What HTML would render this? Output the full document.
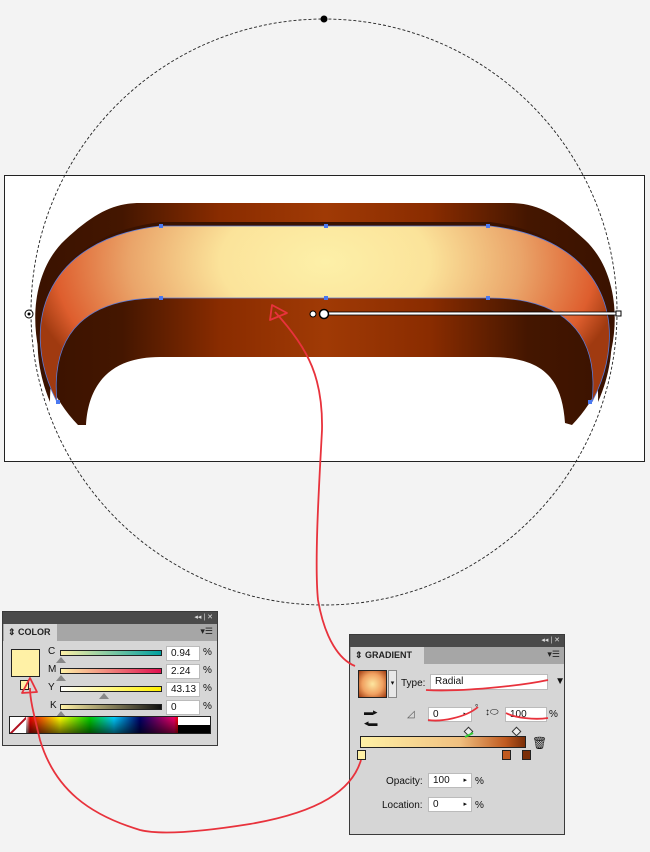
<!DOCTYPE html>
<html><head><meta charset="utf-8"><style>
*{margin:0;padding:0;box-sizing:border-box}
body{width:650px;height:852px;background:#f3f3f3;position:relative;overflow:hidden;font-family:"Liberation Sans",sans-serif;font-size:10px;color:#111}
.abs{position:absolute}
.panel{position:absolute;background:#d6d6d6;border:1px solid #3a3a3a}
.hdr{position:absolute;left:0;right:0;top:0;height:12px;background:#4a4a4a;color:#ddd;font-size:7px;text-align:right;padding-right:4px;line-height:12px}
.tabs{position:absolute;left:0;right:0;top:12px;height:17px;background:#a6a6a6}
.tab{position:absolute;left:1px;top:0;height:17px;background:#d6d6d6;font-weight:bold;font-size:9px;line-height:17px;padding-left:4px;color:#222}
.menu{position:absolute;right:4px;top:2px;font-size:9px;color:#222}
.field{position:absolute;background:#fff;border:1px solid #bbb;height:15px;font-size:10px;line-height:13px;padding-left:4px}
.lbl{position:absolute;font-size:10px}
.slider{position:absolute;height:6px;border:1px solid #222}
.tri{position:absolute;width:0;height:0;border-left:5px solid transparent;border-right:5px solid transparent;border-bottom:6px solid #888}
</style></head><body>
<svg class="abs" style="left:0;top:0" width="650" height="852">
<defs>
<linearGradient id="dk" x1="0" x2="1" y1="0" y2="0">
<stop offset="0" stop-color="#3a1200"/><stop offset="0.15" stop-color="#441600"/><stop offset="0.32" stop-color="#8a2c00"/><stop offset="0.5" stop-color="#a03a05"/><stop offset="0.68" stop-color="#8a2c00"/><stop offset="0.85" stop-color="#441600"/><stop offset="1" stop-color="#3a1200"/></linearGradient>
<radialGradient id="lt" gradientUnits="userSpaceOnUse" cx="325" cy="262" r="300" gradientTransform="translate(325 262) scale(1 0.6) translate(-325 -262)">
<stop offset="0" stop-color="#fdf0a8"/><stop offset="0.35" stop-color="#fbe39a"/><stop offset="0.65" stop-color="#eaa56a"/><stop offset="0.9" stop-color="#de5e2e"/><stop offset="1" stop-color="#a03a10"/></radialGradient>
</defs>
<rect x="4.5" y="175.5" width="640" height="286" fill="#fff" stroke="#222"/>
<path d="M78,425 C25,370 22,280 65,240 C95,212 115,203 140,203 L510,203 C535,203 555,212 585,240 C628,280 625,370 572,425 L565,423 C562,380 545,357 490,357 L160,357 C105,357 88,390 86,425 Z" fill="url(#dk)"/>
<path d="M50,402 C20,330 40,238 160,222 L490,222 C610,238 630,330 598,402 C600,330 560,298 490,298 L160,298 C90,298 50,330 50,402 Z" fill="#3a1200"/>
<path d="M57,402 C20,330 40,240 160,226 L490,226 C610,240 630,330 592,402 C600,330 560,298 490,298 L160,298 C90,298 50,330 57,402 Z" fill="url(#lt)"/>
<path d="M57,402 C20,330 40,240 160,226 L490,226 C610,240 630,330 592,402 M160,298 L490,298 C560,298 600,330 592,402 M160,298 C90,298 50,330 57,402" fill="none" stroke="#5a7ad8" stroke-width="0.8"/>
<g fill="#4a78f0"><rect x="159" y="224" width="4" height="4"/><rect x="324" y="224" width="4" height="4"/><rect x="486" y="224" width="4" height="4"/><rect x="159" y="296" width="4" height="4"/><rect x="324" y="296" width="4" height="4"/><rect x="486" y="296" width="4" height="4"/><rect x="56" y="400" width="4" height="4"/><rect x="588" y="400" width="4" height="4"/></g>
<circle cx="324" cy="312" r="293" fill="none" stroke="#222" stroke-dasharray="3,2" stroke-width="0.9"/>
<circle cx="324" cy="19" r="3.5" fill="#000"/>
<circle cx="29" cy="314" r="4" fill="#fff" stroke="#000"/><circle cx="29" cy="314" r="1.5" fill="#000"/>
<rect x="326" y="312" width="293" height="3" fill="#fff" stroke="#000" stroke-width="0.8"/>
<rect x="616" y="311" width="5" height="5" fill="#fff" stroke="#000"/>
<circle cx="313" cy="314" r="3" fill="#fff" stroke="#000"/>
<circle cx="324" cy="314" r="4.5" fill="#fff" stroke="#000" stroke-width="1.5"/>
</svg>

<div class="panel" style="left:2px;top:611px;width:216px;height:135px">
<div class="hdr">◂◂ | ✕</div>
<div class="tabs"><div class="tab" style="width:53px">⇕ COLOR</div><div class="menu">▾☰</div></div>
<div class="abs" style="left:8px;top:37px;width:29px;height:28px;background:#fff1a6;border:1px solid #222"></div>
<div class="abs" style="left:17px;top:68px;width:9px;height:10px;background:#fff1a6;border:1px solid #222"></div>
<div class="lbl" style="left:45px;top:34px">C</div><div class="slider" style="left:57px;top:38px;width:102px;background:linear-gradient(90deg,#fff1a6,#00a0a0)"></div><div class="tri" style="left:53px;top:45px"></div>
<div class="field" style="left:163px;top:34px;width:34px">0.94</div><div class="lbl" style="left:200px;top:35px">%</div>
<div class="lbl" style="left:45px;top:52px">M</div><div class="slider" style="left:57px;top:56px;width:102px;background:linear-gradient(90deg,#fff1a6,#e01050)"></div><div class="tri" style="left:53px;top:63px"></div>
<div class="field" style="left:163px;top:52px;width:34px">2.24</div><div class="lbl" style="left:200px;top:53px">%</div>
<div class="lbl" style="left:45px;top:70px">Y</div><div class="slider" style="left:57px;top:74px;width:102px;background:linear-gradient(90deg,#fff,#fff000)"></div><div class="tri" style="left:96px;top:81px"></div>
<div class="field" style="left:163px;top:70px;width:34px">43.13</div><div class="lbl" style="left:200px;top:71px">%</div>
<div class="lbl" style="left:47px;top:88px">K</div><div class="slider" style="left:57px;top:92px;width:102px;background:linear-gradient(90deg,#fff1a6,#111)"></div><div class="tri" style="left:53px;top:99px"></div>
<div class="field" style="left:163px;top:88px;width:34px">0</div><div class="lbl" style="left:200px;top:89px">%</div>
<div class="abs" style="left:6px;top:104px;width:202px;height:18px;border:1px solid #222;background:linear-gradient(180deg,transparent,rgba(0,0,0,.6)),linear-gradient(90deg,#fff 0,#fff 8%,#e00 10%,#ff0 25%,#0c0 40%,#0cf 52%,#006 65%,#e06 82%,#e00 84%,#e00 84%,transparent 84%);"></div>
<div class="abs" style="left:7px;top:105px;width:16px;height:16px;background:#fff;overflow:hidden"><div style="position:absolute;left:-3px;top:7px;width:24px;height:2px;background:#b01020;transform:rotate(-45deg)"></div></div>
<div class="abs" style="left:175px;top:105px;width:32px;height:8px;background:#fff"></div><div class="abs" style="left:175px;top:113px;width:32px;height:8px;background:#000"></div>
</div>

<div class="panel" style="left:349px;top:634px;width:216px;height:201px">
<div class="hdr">◂◂ | ✕</div>
<div class="tabs"><div class="tab" style="width:73px">⇕ GRADIENT</div><div class="menu">▾☰</div></div>
<div class="abs" style="left:8px;top:35px;width:29px;height:28px;border:1px solid #222;background:radial-gradient(circle,#fde6a0 0,#f0a060 55%,#a03a10 100%)"></div>
<div class="abs" style="left:38px;top:35px;width:9px;height:28px;background:#e8e8e8;border:1px solid #888;font-size:7px;line-height:26px;text-align:center">▾</div>
<div class="lbl" style="left:51px;top:43px">Type:</div>
<div class="field" style="left:80px;top:39px;width:118px;height:16px;font-size:10px">Radial<span style="position:absolute;right:-18px;top:0">▼</span></div>
<div class="lbl" style="left:14px;top:72px;font-size:9px">▬▸<br>◂▬</div>
<div class="lbl" style="left:57px;top:74px;color:#555">◿</div>
<div class="field" style="left:78px;top:72px;width:44px">0<span style="position:absolute;right:4px;font-size:7px">▸</span></div>
<div class="lbl" style="left:125px;top:68px;font-size:8px">°</div>
<div class="lbl" style="left:135px;top:72px">↕⬭</div>
<div class="field" style="left:155px;top:72px;width:42px">100</div><div class="lbl" style="left:199px;top:74px">%</div>
<div class="abs" style="left:10px;top:101px;width:166px;height:12px;border:1px solid #222;background:linear-gradient(90deg,#fff1a6,#f0c080 60%,#c05a20 88%,#7a2e08)"></div>
<div class="abs" style="left:115px;top:93px;width:7px;height:7px;background:#eee;border:1px solid #333;transform:rotate(45deg)"></div>
<div class="abs" style="left:163px;top:93px;width:7px;height:7px;background:#eee;border:1px solid #333;transform:rotate(45deg)"></div>
<div class="lbl" style="left:182px;top:101px;font-size:12px">🗑</div>
<div class="abs" style="left:7px;top:115px;width:9px;height:10px;background:#fff1a6;border:1px solid #222"></div>
<div class="abs" style="left:152px;top:115px;width:9px;height:10px;background:#c05a20;border:1px solid #222"></div>
<div class="abs" style="left:172px;top:115px;width:9px;height:10px;background:#7a2e08;border:1px solid #222"></div>
<div class="lbl" style="left:36px;top:141px">Opacity:</div>
<div class="field" style="left:78px;top:138px;width:44px">100<span style="position:absolute;right:4px;font-size:7px">▸</span></div><div class="lbl" style="left:125px;top:141px">%</div>
<div class="lbl" style="left:32px;top:165px">Location:</div>
<div class="field" style="left:78px;top:162px;width:44px">0<span style="position:absolute;right:4px;font-size:7px">▸</span></div><div class="lbl" style="left:125px;top:165px">%</div>
</div>

<svg class="abs" style="left:0;top:0" width="650" height="852">
<g fill="none" stroke="#e8323c" stroke-width="1.8" stroke-linejoin="round">
<path d="M355,666 C340,660 325,640 318,600 C314,560 320,470 322,430 C323,380 310,350 275,312"/>
<path d="M270,320 L272,305 L287,313 Z"/>
<path d="M361,760 C352,790 320,812 250,824 C200,832 160,835 140,830 C90,815 55,790 40,740 C34,715 30,700 30,688"/>
<path d="M22,693 L30,678 L37,692 Z"/>
<path d="M426,690 C460,692 520,686 548,680 M428,720 C440,722 465,718 478,707 M506,713 C515,718 535,720 548,718"/>
</g>
<path d="M465,737 L473,733" stroke="#3c3" stroke-width="2"/>
</svg>
</body></html>
